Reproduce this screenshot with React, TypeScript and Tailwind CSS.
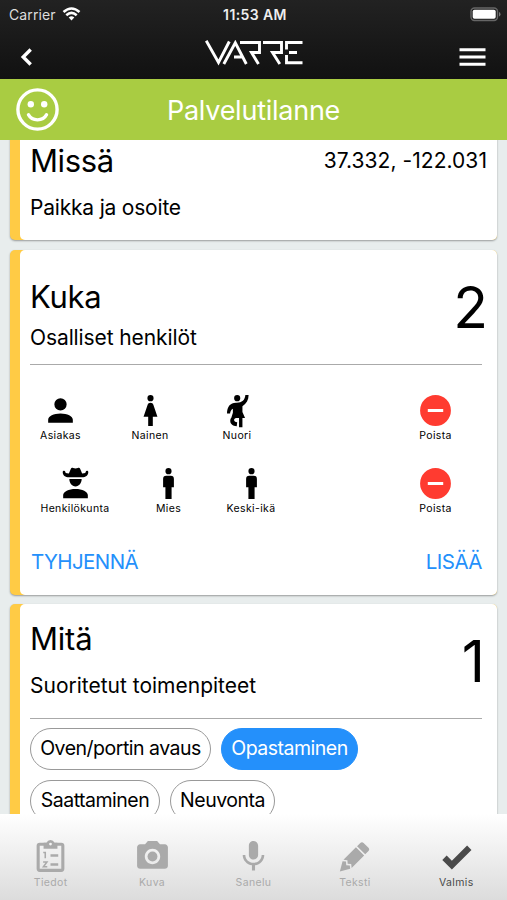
import type { ReactNode } from 'react'
import { MdMic, MdPhotoCamera } from 'react-icons/md'

const paths = {
  account:
    'M12,4A4,4 0 0,1 16,8A4,4 0 0,1 12,12A4,4 0 0,1 8,8A4,4 0 0,1 12,4M12,14C16.42,14 20,15.79 20,18V20H4V18C4,15.79 7.58,14 12,14Z',
  cowboy:
    'M9,2.4C9.3,1.7 9.9,1.7 10.5,2C11.4,2.4 12.6,2.4 13.5,2C14.1,1.7 14.7,1.7 15,2.4L16.3,5.5C18.2,5.5 18.7,5 18.7,4.2C18.9,3.5 20.3,3.6 20.3,4.6C20.3,6.8 18.6,8 16.2,8H7.8C5.4,8 3.7,6.8 3.7,4.6C3.7,3.6 5.1,3.5 5.3,4.2C5.3,5 5.8,5.5 7.7,5.5ZM8,9.1H16C16,11.7 14.4,13.9 12,13.9C9.6,13.9 8,11.7 8,9.1ZM12,15.5C16.4,15.5 20,17.2 20,19.5V21.5H4V19.5C4,17.2 7.6,15.5 12,15.5Z',
  female:
    'M12,2A2,2 0 0,1 14,4A2,2 0 0,1 12,6A2,2 0 0,1 10,4A2,2 0 0,1 12,2M10.5,22V16H7.5L10.09,8.41C10.34,7.59 11.1,7 12,7C12.9,7 13.66,7.59 13.91,8.41L16.5,16H13.5V22H10.5Z',
  male:
    'M12,2A2,2 0 0,1 14,4A2,2 0 0,1 12,6A2,2 0 0,1 10,4A2,2 0 0,1 12,2M10.5,7H13.5A2,2 0 0,1 15.5,9V14.5H14V22H10V14.5H8.5V9A2,2 0 0,1 10.5,7Z',
  dance:
    'M11.8,2A2,2 0 1,1 11.8,6A2,2 0 0,1 11.8,2ZM17.1,2H19.2C19.2,5.2 17.8,7.6 15.2,9.2V13L16.9,16.8H15.2V22.8H13V16.8H11.2C10.3,17 9.8,17.5 9.8,18.1C9.8,18.9 10.5,19.4 11.8,19.6L11.5,22.2C8.8,21.9 7.3,20.7 7.3,18.6C7.3,17.7 7.6,17.2 8,16.7L9,13.4V10.8C7.9,11.4 7.3,12.4 7.2,14H5.2C5.2,9.6 7.3,7 11,7C14.7,7.2 16.8,5.4 17.1,2Z',
  minus: 'M17,13H7V11H17M12,2A10,10 0 0,0 2,12A10,10 0 0,0 12,22A10,10 0 0,0 22,12A10,10 0 0,0 12,2Z',
  pencil:
    'M16.84,2.73C16.45,2.73 16.07,2.88 15.77,3.17L13.65,5.29L18.95,10.6L21.07,8.5C21.67,7.89 21.67,6.94 21.07,6.36L17.9,3.17C17.6,2.88 17.22,2.73 16.84,2.73M12.94,6L4.84,14.11L7.4,14.39L7.58,16.68L9.86,16.85L10.15,19.41L18.25,11.3M4.25,15.04L2.5,21.73L9.2,19.94L8.96,17.78L6.65,17.61L6.47,15.29',
  check: 'M9,20.42L2.79,14.21L5.62,11.38L9,14.77L18.88,4.88L21.71,7.71L9,20.42Z',
}

function Icon({ name }: { name: keyof typeof paths }) {
  return (
    <svg viewBox="0 0 24 24" className="h-[37px] w-[37px] shrink-0" fill="currentColor">
      <path d={paths[name]} />
    </svg>
  )
}

function ClipboardIcon() {
  return (
    <svg viewBox="0 0 24 24" className="h-[37px] w-[37px]" fill="none" stroke="currentColor">
      <rect x="4" y="4" width="16" height="17" rx="1" strokeWidth="2" />
      <path d="M7.5 3H9.4A2.8 2.8 0 0 1 14.6 3H16.5V7H7.5Z" fill="currentColor" stroke="none" />
      <circle cx="12" cy="3.9" r="0.9" fill="#f5f5f5" stroke="none" />
      <path d="M12 11.4H17M12 17.2H17" strokeWidth="1.6" />
      <path d="M7.3 9.4H8.6V13.2M7.2 15.5H9.7L7.4 18.7H9.9" strokeWidth="1" />
    </svg>
  )
}

function Logo() {
  return (
    <svg viewBox="0 0 98 26" className="h-[26px] w-[98px]" fill="none" stroke="white" strokeWidth="2.9">
      <path d="M1.2 .8L13.5 22.5L24.3 1.5" />
      <path d="M18.8 24L30.3 2.8L41.3 24M29 17H38" />
      <path d="M35 2.5H54.5V12.5H46.5L53.5 24" />
      <path d="M58 2.5H76.5V12.5H67.5L74.8 24" />
      <path d="M97.5 2.5H81.5V9.5M81.5 15V22.8H97.5M84 12.5H92" />
    </svg>
  )
}

type Person = { icon: keyof typeof paths; label: string; width: string }

const people: Person[][] = [
  [
    { icon: 'account', label: 'Asiakas', width: 'w-[61px]' },
    { icon: 'female', label: 'Nainen', width: 'w-[58px]' },
    { icon: 'dance', label: 'Nuori', width: 'w-[56px]' },
  ],
  [
    { icon: 'cowboy', label: 'Henkilökunta', width: 'w-[90px]' },
    { icon: 'male', label: 'Mies', width: 'w-[37px]' },
    { icon: 'male', label: 'Keski-ikä', width: 'w-[68px]' },
  ],
]

const actions = [
  { label: 'Oven/portin avaus', selected: false, width: 'w-[181px]' },
  { label: 'Opastaminen', selected: true, width: 'w-[137px]' },
  { label: 'Saattaminen', selected: false, width: 'w-[130px]' },
  { label: 'Neuvonta', selected: false, width: 'w-[105px]' },
]

const tabs = [
  { label: 'Tiedot', icon: <ClipboardIcon />, active: false },
  { label: 'Kuva', icon: <MdPhotoCamera className="h-[37px] w-[37px]" />, active: false },
  { label: 'Sanelu', icon: <MdMic className="h-[37px] w-[37px]" />, active: false },
  { label: 'Teksti', icon: <Icon name="pencil" />, active: false },
  { label: 'Valmis', icon: <Icon name="check" />, active: true },
]

function Card({ height, children }: { height: string; children: ReactNode }) {
  return (
    <section className={`${height} shrink-0 rounded-[5px] bg-[#ffcb45] pl-2.5 shadow-[0_1px_2px_rgba(0,0,0,0.35)]`}>
      <div className="h-full rounded-[5px] bg-white pl-2.5 pr-[15px]">{children}</div>
    </section>
  )
}

export default function App() {
  return (
    <div className="flex h-[900px] w-[507px] flex-col overflow-hidden whitespace-nowrap bg-[#e8eded] font-['Inter',sans-serif] text-black">
      <header className="h-[79px] shrink-0 bg-linear-to-b from-[#222222] to-[#111111] text-white">
        <div className="grid h-7 grid-cols-3 items-center pl-[9px] pr-[6px] text-[14px]">
          <div className="flex items-center gap-1.5 text-[#dddddd]">
            <span className="tracking-[0.1px]">Carrier</span>
            <svg viewBox="0 0 18 14" className="h-3.5 w-[19px]" fill="none" stroke="white" strokeWidth="2.6">
              <path d="M1 5Q9-2 17 5M3.8 8.2Q9 3.7 14.2 8.2" />
              <path d="M6.2 10.4Q9 8 11.8 10.4L9 13.4Z" fill="white" stroke="none" />
            </svg>
          </div>
          <span className="text-center text-[14px] font-semibold tracking-[0.4px] text-[#eeeeee]">11:53 AM</span>
          <svg viewBox="0 0 31 15" className="h-[15px] w-[31px] justify-self-end">
            <rect x="1" y="1" width="26.5" height="12.5" rx="3.5" fill="none" stroke="#666" strokeWidth="1.4" />
            <rect x="2.7" y="2.8" width="23" height="9" rx="1.8" fill="white" />
            <path d="M29 5V9.5Q30.5 9 30.5 7.2T29 5Z" fill="#777" />
          </svg>
        </div>
        <div className="flex items-start justify-between pl-5 pr-[21px]">
          <svg viewBox="0 0 26 18" className="mt-5 h-[18px] w-[26px]" fill="none" stroke="white" strokeWidth="3.4">
            <path d="M10.7 1.5L3.2 9L10.7 16.5" />
          </svg>
          <div className="mt-3 pl-0.5">
            <Logo />
          </div>
          <svg viewBox="0 0 27 18" className="mt-5 h-[18px] w-[27px]" stroke="white" strokeWidth="3">
            <path d="M0.5 1.7H26.5M0.5 9H26.5M0.5 16.3H26.5" />
          </svg>
        </div>
      </header>

      <div className="flex h-[61px] shrink-0 items-center bg-[#a9cc42] pl-4 text-white">
        <svg viewBox="0 0 43 43" className="h-[43px] w-[43px]" fill="none" stroke="white" strokeWidth="3.4">
          <circle cx="21.5" cy="21.5" r="19.6" />
          <path d="M12.5 26.8C16 33.5 27 33.5 30.5 26.8" strokeLinecap="round" />
          <circle cx="14.8" cy="16.3" r="3.2" fill="white" stroke="none" />
          <circle cx="28.2" cy="16.3" r="3.2" fill="white" stroke="none" />
        </svg>
        <h1 className="flex-1 pr-[59px] pt-[3px] text-center text-[27px] tracking-[-0.25px]">Palvelutilanne</h1>
      </div>

      <main className="flex min-h-0 flex-1 flex-col overflow-hidden px-2.5">
        {/* scrolled partly under the title bar */}
        <div className="-mt-5 shrink-0">
          <Card height="h-[120px]">
            <div className="-mr-[5px] flex items-center justify-between pt-[23px]">
              <h2 className="text-[31px] leading-9 tracking-[-0.4px]">Missä</h2>
              <span className="text-[21px] tracking-[0.05px]">37.332, -122.031</span>
            </div>
            <p className="mt-[15px] text-[21px] leading-7 tracking-[-0.2px]">Paikka ja osoite</p>
          </Card>
        </div>

        <div className="h-2.5 shrink-0" />

        <Card height="h-[345px]">
          <div className="flex h-[115px] justify-between border-b border-[#aaaaaa]">
            <div className="pt-[29px]">
              <h2 className="text-[31px] leading-9 tracking-[-0.3px]">Kuka</h2>
              <p className="mt-[9px] text-[21px] leading-7 tracking-[-0.1px]">Osalliset henkilöt</p>
            </div>
            <span className="-mr-1.5 pt-[28px] text-[57px] leading-[60px]">2</span>
          </div>
          <div className="pt-[27px]">
            {people.map((row, i) => (
              <div key={i} className="flex h-[73px] gap-[30px] text-[10.5px] leading-[13px] tracking-[0.35px]">
                {row.map((p) => (
                  <div key={p.label} className={`flex flex-col items-center ${p.width}`}>
                    <Icon name={p.icon} />
                    <span>{p.label}</span>
                  </div>
                ))}
                <div className="ml-auto mr-7 flex w-[37px] flex-col items-center">
                  <span className="text-[#ff3b30]">
                    <Icon name="minus" />
                  </span>
                  <span>Poista</span>
                </div>
              </div>
            ))}
          </div>
          <div className="flex justify-between pl-px pt-2.5 text-[20.5px] leading-7 text-[#2490fb]">
            <button className="tracking-[-0.6px]">TYHJENNÄ</button>
            <button className="tracking-[-0.5px]">LISÄÄ</button>
          </div>
        </Card>

        <div className="h-[9px] shrink-0" />

        <Card height="h-[320px]">
          <div className="flex h-[115px] justify-between border-b border-[#aaaaaa]">
            <div className="pt-[17px]">
              <h2 className="text-[31px] leading-9 tracking-[-0.2px]">Mitä</h2>
              <p className="mt-[15px] text-[21px] leading-7">Suoritetut toimenpiteet</p>
            </div>
            <span className="-mr-[3px] pt-[28px] text-[57px] leading-[60px]">1</span>
          </div>
          <div className="flex flex-wrap gap-2.5 pt-[9px]">
            {actions.map((a) => (
              <button
                key={a.label}
                className={`h-[42px] rounded-full border text-[19.5px] tracking-[-0.5px] ${a.width} ${
                  a.selected ? 'border-[#2490fb] bg-[#2490fb] text-white' : 'border-[#999999] bg-white'
                }`}
              >
                {a.label}
              </button>
            ))}
          </div>
        </Card>
      </main>

      <nav className="z-10 grid h-[86px] shrink-0 grid-cols-5 bg-linear-to-b from-white to-[#dcdcdc] pt-6">
        {tabs.map((t) => (
          <div
            key={t.label}
            className={`flex flex-col items-center text-[10.5px] leading-4 tracking-[0.35px] ${
              t.active ? 'text-[#4a4a4a]' : 'text-[#aaaaaa]'
            }`}
          >
            {t.icon}
            <span>{t.label}</span>
          </div>
        ))}
      </nav>
    </div>
  )
}
